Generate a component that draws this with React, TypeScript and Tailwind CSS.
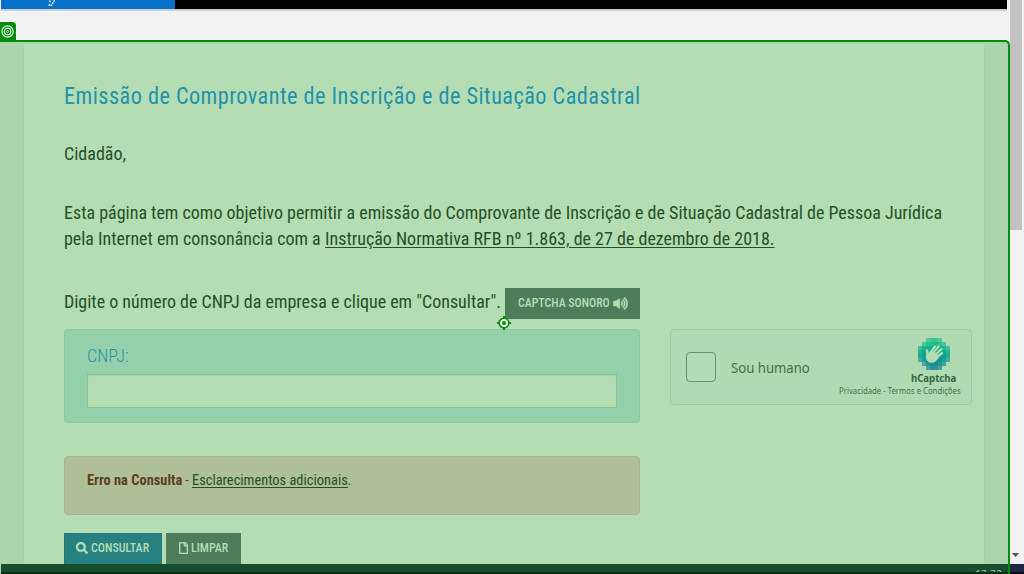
import { useLayoutEffect, useRef, useState } from "react";
import type { ReactNode } from "react";
import { FaSearch, FaRegFile, FaVolumeUp } from "react-icons/fa";

type FitProps = { width: number; className?: string; children: ReactNode };

// One line of text, condensed horizontally to the given width.
function Fit({ width, className = "", children }: FitProps) {
  const ref = useRef<HTMLSpanElement>(null);
  const [scale, setScale] = useState(1);
  useLayoutEffect(() => {
    if (ref.current) setScale(width / ref.current.offsetWidth);
  }, [width]);
  return (
    <span className="inline-block whitespace-nowrap align-baseline" style={{ width }}>
      <span ref={ref} className={`inline-block origin-left ${className}`} style={{ transform: `scaleX(${scale})` }}>
        {children}
      </span>
    </span>
  );
}

const rows = ["..1221..", ".134431.", "13444431", "24444442", "24444442", "13444431", ".134431.", "..1221.."];
const rowColors = ["#27c18e", "#1dbb8d", "#0eb28c", "#0da98e", "#10a090", "#149693", "#168e92", "#1b8693"];
const alpha: Record<string, number> = { "1": 0.68, "2": 0.84, "3": 0.9, "4": 1 };

function CaptchaLogo() {
  return (
    <svg className="h-8 w-8" viewBox="0 0 32 32" shapeRendering="crispEdges">
      {rows.map((row, y) =>
        row.split("").map((c, x) =>
          c === "." ? null : (
            <rect key={`${x}-${y}`} x={x * 4} y={y * 4} width="4" height="4" fill={rowColors[y]} opacity={alpha[c]} />
          ),
        ),
      )}
      <g shapeRendering="auto" stroke="#b4ddb4" fill="none" strokeLinecap="round" strokeLinejoin="round">
        <path d="M11.5 16 17 8.6M13.5 16.5 20.6 8.6M16 18 23.4 11.2M17.5 20 24 15" strokeWidth="2.3" />
        <path d="M9 12.6 10 18" strokeWidth="2.6" />
        <path d="M8.3 17C7.6 22 10.5 24.6 14 24.4 17.5 24.2 19.3 21.6 20.5 18.8L17 13.5 13 13.8 10.5 17Z" fill="#b4ddb4" strokeWidth="0.8" />
      </g>
      <path d="M14.6 13.4 18 9.8M16.8 15 21.2 10.8M18.8 16.8 22.6 13.8" stroke="#10a78e" strokeWidth="0.6" shapeRendering="auto" />
    </svg>
  );
}

function TargetMarker() {
  return (
    <svg className="absolute left-[497px] top-[316px] h-[14px] w-[14px]" viewBox="0 0 14 14">
      <path d="M7 0V14M0 7H14" stroke="#078b0c" strokeWidth="2" />
      <circle cx="7" cy="7" r="4.8" fill="#e1f5e1" stroke="#078b0c" strokeWidth="1.6" />
      <circle cx="7" cy="7" r="2" fill="#078b0c" />
    </svg>
  );
}

export default function App() {
  return (
    <div className="relative flex h-[574px] w-[1024px] overflow-hidden bg-[#f2f2f2] font-['Roboto_Condensed','Roboto',sans-serif] text-[#255025] [font-stretch:75%]">
      <div className="flex w-[1010px] shrink-0 flex-col">
        <header className="ml-px flex h-[9px] w-[1006px] shrink-0 bg-black">
          <div className="h-[9px] w-[174px] bg-[#0470c8]">
            <svg className="ml-[46px] h-[7px] w-3" viewBox="0 0 12 7">
              <path d="M2.5 0.5 4 3M7.5 0 5.5 4 4 5.8M1.5 5H3.5" fill="none" stroke="white" strokeWidth="1.3" strokeDasharray="2 0.7" />
            </svg>
          </div>
        </header>
        <div className="ml-px h-[2px] w-[1006px] shrink-0 bg-[#cecece]" />
        <div className="flex h-[29px] shrink-0 items-end">
          <div className="flex h-[18px] w-4 items-center justify-center rounded-tr-[4px] bg-[#078b0c]">
            <svg className="mr-[2px] h-[13px] w-[13px]" viewBox="0 0 13 13" fill="none" stroke="#d9f0d9">
              <circle cx="6.5" cy="6.5" r="5.6" strokeWidth="1.2" />
              <circle cx="6.5" cy="6.5" r="3.3" strokeWidth="1.2" />
              <circle cx="6.5" cy="6.5" r="1" />
            </svg>
          </div>
        </div>
        <div className="flex h-[534px] flex-col overflow-hidden rounded-tr-[5px] border-r-2 border-t-2 border-[#078b0c] bg-[#acd5ac] pt-[2px]">
          <main className="ml-[23px] h-[520px] w-[962px] shrink-0 border-x border-[#a6d0a8] bg-[#b4ddb4] pl-10">
            <h1 className="h-[75px] pt-[36px] text-2xl leading-8 text-[#2292a9]">
              <Fit width={577} className="tracking-[0.5px]">Emissão de Comprovante de Inscrição e de Situação Cadastral</Fit>
            </h1>
            <p className="h-[81px] pt-[22px] text-lg leading-[26px]">
              <Fit width={62}>Cidadão,</Fit>
            </p>
            <div className="h-[88px] text-lg leading-[26px]">
              <div><Fit width={878}>Esta página tem como objetivo permitir a emissão do Comprovante de Inscrição e de Situação Cadastral de Pessoa Jurídica</Fit></div>
              <div className="flex">
                <Fit width={261}>pela Internet em consonância com a&nbsp;</Fit>
                <Fit width={449.5} className="underline underline-offset-2">Instrução Normativa RFB nº 1.863, de 27 de dezembro de 2018.</Fit>
              </div>
            </div>
            <div className="flex h-[31px] text-lg leading-[28px]">
              <Fit width={437}>Digite o número de CNPJ da empresa e clique em "Consultar".</Fit>
              <button className="ml-1 flex h-[31px] w-[135px] items-center bg-[#4d7d5b] pl-[13px] text-[13px] font-medium leading-[29px] text-[#b4ddb4]">
                <span className="-mt-[2px] h-[29px]"><Fit width={92}>CAPTCHA SONORO</Fit></span>
                <FaVolumeUp className="-mt-px ml-[3px] h-[13px] w-[15px]" stroke="currentColor" strokeWidth="20" />
              </button>
            </div>
            <div className="mt-[10px] flex gap-[30px]">
              <section className="h-[94px] w-[576px] rounded-[4px] border border-[#88caa4] bg-[#94d0ac] px-[22px] pt-[13px]">
                <label className="block h-[31px] text-lg font-light leading-[26px] text-[#2b92a6]">
                  <Fit width={42}>CNPJ:</Fit>
                </label>
                <input className="block h-[34px] w-[530px] border border-[#8cbd94] bg-[#b4ddb4] shadow-[inset_0_1px_1px_#a5cfa5] outline-none" />
              </section>
              <aside className="flex h-[76px] w-[302px] rounded-[4px] border border-[#9dcaa0] bg-[#b0dab2] font-['Noto_Sans'] [font-stretch:100%]">
                <div className="ml-[15px] mt-[22px] h-[30px] w-[30px] rounded-[4px] border border-[#639266] bg-[#b2dcb3]" />
                <div className="ml-[15px] mt-[27px] text-sm leading-[22px] text-[#3d743f]"><Fit width={79}>Sou humano</Fit></div>
                <div className="ml-[28px] flex w-[123px] flex-col items-end pt-[8px]">
                  <div className="mr-[11px]"><CaptchaLogo /></div>
                  <div className="mr-[5px] h-4 text-[10px] font-bold leading-4 text-[#34663b]"><Fit width={45}>hCaptcha</Fit></div>
                  <div className="h-[10px] text-[8px] leading-[10px] text-[#427448]"><Fit width={122}>Privacidade - Termos e Condições</Fit></div>
                </div>
              </aside>
            </div>
            <section className="mt-[33px] flex h-[59px] w-[576px] rounded-[4px] border border-[#abb38f] bg-[#afbf9a] pl-[22px] pt-[13px] text-sm leading-5">
              <Fit width={95} className="font-bold text-[#593f1d]">Erro na Consulta</Fit>
              <Fit width={10} className="text-[#593f1d]">&nbsp;-&nbsp;</Fit>
              <Fit width={155.5} className="underline underline-offset-2">Esclarecimentos adicionais</Fit>
              <span>.</span>
            </section>
            <div className="mt-[18px] flex h-[31px] gap-1 text-[13px] font-medium leading-[28px] text-[#b4ddb4]">
              <button className="flex w-[98px] items-start border border-b-0 border-[#207877] bg-[#278181] pl-[11px]">
                <FaSearch className="mr-[3px] mt-2 h-3 w-3" stroke="currentColor" strokeWidth="20" /><Fit width={58}>CONSULTAR</Fit>
              </button>
              <button className="flex w-[75px] items-start bg-[#4d7d5b] pl-[13px] pt-px">
                <FaRegFile className="mr-[3px] mt-2 h-3 w-[9px]" stroke="currentColor" strokeWidth="20" /><Fit width={37}>LIMPAR</Fit>
              </button>
            </div>
          </main>
          <footer className="ml-px h-[10px] shrink-0 overflow-hidden border-b-2 border-[#07300f] bg-[#194d30]">
            <div className="ml-[974px] mt-[4px] text-[11px] leading-3 text-[#a9cfac]"><Fit width={27} className="font-['Noto_Sans']">12:22</Fit></div>
          </footer>
        </div>
      </div>
      <aside className="flex w-[14px] flex-col">
        <div className="h-[230px] w-3 bg-[#c1c1c1]" />
        <div className="flex h-[334px] w-3 items-end bg-[#f1f1f1] pb-[7px] pl-[2px]">
          <svg className="h-1 w-[7px]" viewBox="0 0 7 4"><path d="M0 0H7L3.5 4Z" fill="#505050" /></svg>
        </div>
        <div className="h-[10px] border-b-2 border-[#080c18] bg-[#1b2745]" />
      </aside>
      <TargetMarker />
    </div>
  );
}
